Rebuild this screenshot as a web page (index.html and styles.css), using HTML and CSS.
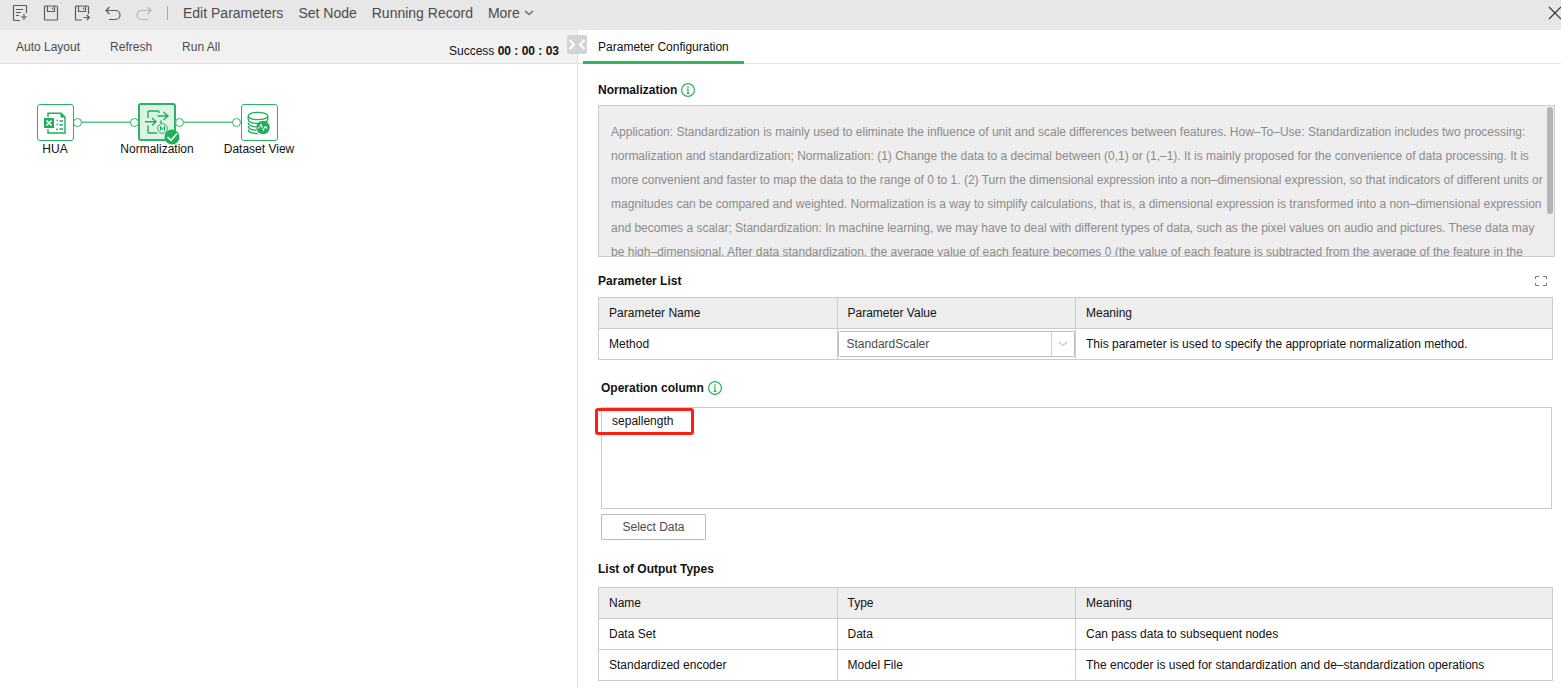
FILE: index.html
```html
<!DOCTYPE html>
<html lang="en">
<head>
<meta charset="utf-8">
<title>Parameter Configuration</title>
<link rel="stylesheet" href="styles.css">
</head>
<body>
<div class="app">
  <header class="topbar">
    <div class="tools">
      <button class="tool" aria-label="New"><svg width="16" height="18" viewBox="0 0 16 18"><path d="M14.500 9V2.500a1 1 0 0 0-1-1H2.500a1 1 0 0 0-1 1v13a1 1 0 0 0 1 1H8M4 5.500h7M4 8.500h5M4 11.500h3M12 10v6M9 13h6"/></svg></button>
      <button class="tool" aria-label="Save"><svg width="16" height="18" viewBox="0 0 16 18"><path d="M2.500 2h11a1 1 0 0 1 1 1v12a1 1 0 0 1-1 1h-11a1 1 0 0 1-1-1V3a1 1 0 0 1 1-1zM4.500 2v5.500h7V2M9.500 3.500v2"/></svg></button>
      <button class="tool" aria-label="Save as"><svg width="16" height="18" viewBox="0 0 16 18"><path d="M8 16H2.500a1 1 0 0 1-1-1V3a1 1 0 0 1 1-1h11a1 1 0 0 1 1 1v7M4.500 2v5.500h7V2M9.500 3.500v2M9.500 13.500h5.500M12.800 11l2.500 2.500-2.500 2.500"/></svg></button>
      <button class="tool" aria-label="Undo"><svg width="16" height="18" viewBox="0 0 16 18"><path d="M4.500 3L1 6.500 4.500 10M1.500 6.500h9a4.500 4.500 0 0 1 0 9H4"/></svg></button>
      <button class="tool faded" aria-label="Redo"><svg width="16" height="18" viewBox="0 0 16 18"><path d="M11.500 3L15 6.500 11.500 10M14.500 6.500H5.500a4.500 4.500 0 0 0 0 9H12"/></svg></button>
    </div>
    <span class="divider"></span>
    <nav class="menu">
      <button>Edit Parameters</button>
      <button>Set Node</button>
      <button>Running Record</button>
      <button>More <svg width="10" height="6" viewBox="0 0 10 6"><path d="M1 1l4 3.500L9 1"/></svg></button>
    </nav>
    <button class="close" aria-label="Close"><svg width="13" height="14" viewBox="0 0 13 14"><path d="M1 1l12 12M13 1L1 13"/></svg></button>
  </header>

  <main class="main">
    <section class="flow">
      <div class="flowbar">
        <button>Auto Layout</button>
        <button>Refresh</button>
        <button>Run All</button>
        <p class="status">Success <b>00 : 00 : 03</b></p>
      </div>
      <div class="canvas">
        <svg class="links" width="300" height="60" viewBox="0 0 300 60"><path d="M81 58.200h50M183 58.200h50"/></svg>
        <div class="node node-source">
          <div class="tile"><svg width="24" height="24" viewBox="0 0 24 24" fill="none" stroke="#1fae5a" stroke-width="1.400"><path d="M5 6V2.200h13l4 4M5 18v4h17V5.500M4.500 22h18"/><path d="M17.500 1.500l5 5h-5z" fill="#1fae5a" stroke="none"/><path d="M16.500 10H20M16.500 14H20M16.500 18H20M13.500 9.300H15M13.500 13.300H15M13 18.300h2" stroke-width="1.300"/><path d="M1 7h10v10H1z" fill="#1fae5a" stroke="none"/><path d="M3.500 9.500l5 5M8.500 9.500l-5 5" stroke="#fff" stroke-width="1.600"/></svg></div>
          <span>HUA</span>
        </div>
        <div class="node node-norm">
          <div class="tile active"><svg width="26" height="26" viewBox="0 0 26 26" fill="none" stroke="#1fae5a" stroke-width="1.400"><path d="M4 9V3a1 1 0 0 1 1-1h9a1 1 0 0 1 1 1v1M4 16.500V23a1 1 0 0 0 1 1h8M13.500 7H24M19.500 3l4.500 4-4.500 4M1 12.800h11M8 9l4 3.800-4 3.700M17 11.500v3"/><circle cx="18.500" cy="19.500" r="4.800" stroke-width="1"/><path d="M16.500 21.500v-4l2 3 2-3v4" stroke-width="1"/></svg>
            <svg class="done" width="16" height="16" viewBox="0 0 16 16"><circle cx="8" cy="8" r="7.500" fill="#1fae5a"/><path d="M3.500 8l3.500 3.300L13 4.500" fill="none" stroke="#fff" stroke-width="1.600"/></svg>
          </div>
          <span>Normalization</span>
        </div>
        <div class="node node-view">
          <div class="tile"><svg width="24" height="24" viewBox="0 0 24 24" fill="none" stroke="#1fae5a" stroke-width="1.300"><ellipse cx="11" cy="5" rx="9.800" ry="3.700"/><path d="M1.200 5v3.500c0 2.200 4 4 9.500 4s10-1.800 10-4V5M1.200 11.500c0 2.300 3.500 4 8 4.300M1.200 15c0 2.500 3.500 4 8 4.200M1.200 18.500c0 2.500 4 4 9.500 4"/><circle cx="16" cy="16.500" r="6.800" fill="#1fae5a" stroke="none"/><path d="M10.500 17h1.500l2-3.500 2.500 5.500 2-4 1.500 3" stroke="#fff" stroke-width="1.200" stroke-dasharray="2.500 .8"/></svg></div>
          <span>Dataset View</span>
        </div>
        <i class="port port-a"></i><i class="port port-b"></i><i class="port port-c"></i><i class="port port-d"></i>
      </div>
      <button class="collapse" aria-label="Collapse panel"><svg width="20" height="19" viewBox="0 0 20 19"><path d="M2.500 5l4.500 4.500L2.500 14M17.500 5L13 9.500l4.500 4.500"/></svg></button>
    </section>

    <section class="panel">
      <div class="tabs"><button class="tab">Parameter Configuration</button></div>
      <div class="content">
        <h2 class="heading">Normalization <svg class="info" width="14" height="14" viewBox="0 0 14 14"><circle cx="7" cy="7" r="6.400"/><path d="M5.800 6H7v4.200M5.500 10.400h3"/><path d="M7 3.200v1.500" stroke-width="1.500"/></svg></h2>
        <div class="description">
          <p>Application: Standardization is mainly used to eliminate the influence of unit and scale differences between features. How–To–Use: Standardization includes two processing:<br>
          normalization and standardization; Normalization: (1) Change the data to a decimal between (0,1) or (1,–1). It is mainly proposed for the convenience of data processing. It is<br>
          more convenient and faster to map the data to the range of 0 to 1. (2) Turn the dimensional expression into a non–dimensional expression, so that indicators of different units or<br>
          magnitudes can be compared and weighted. Normalization is a way to simplify calculations, that is, a dimensional expression is transformed into a non–dimensional expression<br>
          and becomes a scalar; Standardization: In machine learning, we may have to deal with different types of data, such as the pixel values on audio and pictures. These data may<br>
          be high–dimensional. After data standardization, the average value of each feature becomes 0 (the value of each feature is subtracted from the average of the feature in the</p>
          <i class="thumb"></i>
        </div>

        <div class="list-head">
          <h2 class="heading">Parameter List</h2>
          <button class="expand" aria-label="Full screen"><svg width="12" height="10" viewBox="0 0 12 10"><path d="M.5 3V.5H4M8 .5h3.500V3M11.500 7v2.500H8M4 9.500H.5V7"/></svg></button>
        </div>
        <table class="grid">
          <thead><tr><th>Parameter Name</th><th>Parameter Value</th><th>Meaning</th></tr></thead>
          <tbody><tr>
            <td><label for="method">Method</label></td>
            <td class="field"><div class="picker"><select id="method"><option>StandardScaler</option></select><span class="arrow"><svg width="10" height="6" viewBox="0 0 10 6"><path d="M1 1l4 3.500L9 1"/></svg></span></div></td>
            <td>This parameter is used to specify the appropriate normalization method.</td>
          </tr></tbody>
        </table>

        <div class="operation">
          <h2 class="heading">Operation column <svg class="info" width="14" height="14" viewBox="0 0 14 14"><circle cx="7" cy="7" r="6.400"/><path d="M5.800 6H7v4.200M5.500 10.400h3"/><path d="M7 3.200v1.500" stroke-width="1.500"/></svg></h2>
          <div class="columns"><span>sepallength</span><i class="marker"></i></div>
          <button class="select-data">Select Data</button>
        </div>

        <h2 class="heading output-title">List of Output Types</h2>
        <table class="grid">
          <thead><tr><th>Name</th><th>Type</th><th>Meaning</th></tr></thead>
          <tbody>
            <tr><td>Data Set</td><td>Data</td><td>Can pass data to subsequent nodes</td></tr>
            <tr><td>Standardized encoder</td><td>Model File</td><td>The encoder is used for standardization and de–standardization operations</td></tr>
          </tbody>
        </table>
      </div>
    </section>
  </main>
</div>
</body>
</html>
```
FILE: styles.css
```css
* { box-sizing: border-box; }
body { margin: 0; background: #fff; color: #111; font: 12px/16px "Liberation Sans", Arial, sans-serif; }
button { margin: 0; padding: 0; border: 0; background: none; color: inherit; font: inherit; }
svg { display: block; }
p, h2 { margin: 0; }

.app { display: flex; flex-direction: column; min-height: 100vh; }

.topbar { display: flex; align-items: center; height: 30px; padding: 0 0 4px 12px; background: #e7e7e7; color: #4c4c4c; font-size: 14px; }
.topbar svg { fill: none; stroke: #5c5c5c; stroke-width: 1.2; }
.tools { display: flex; gap: 15px; }
.faded { opacity: 0.35; }
.divider { width: 1px; height: 14px; margin: 0 15px; background: #aaa; }
.menu { display: flex; gap: 15px; }
.menu button { display: flex; align-items: center; gap: 4px; }
.close { margin-left: auto; }
.topbar .close svg { stroke: #333; }

.main { display: flex; flex: 1; }

.flow { position: relative; display: flex; flex-direction: column; width: 37.03%; border-right: 1px solid #ddd; }
.flowbar { display: flex; align-items: center; gap: 30px; height: 34px; padding: 0 18px 0 16px; border-bottom: 1px solid #e0e0e0; background: #f1f1f1; color: #4c4c4c; }
.status { margin-left: auto; padding-top: 8px; color: #111; }
.collapse { position: absolute; top: 5px; right: -10px; border-radius: 2px; background: #d3d3d3; }
.collapse svg { fill: none; stroke: #fff; stroke-width: 2; }

.canvas { position: relative; flex: 1; }
.links { position: absolute; top: 0; left: 0; stroke: #5fc583; stroke-width: 1.4; }
.node { position: absolute; top: 39px; display: flex; flex-direction: column; align-items: center; width: 100px; }
.node-source { left: 5px; }
.node-norm { left: 107px; }
.node-view { left: 209px; }
.tile { position: relative; display: flex; align-items: center; justify-content: center; width: 37px; height: 37px; margin-top: 1px; border: 1px solid #28b562; border-radius: 3px; background: #fff; }
.active { width: 38px; height: 38px; margin-top: 0; border-width: 2px; background: #def3e6; }
.done { position: absolute; right: -6px; bottom: -6px; }
.port { position: absolute; top: 54px; width: 9px; height: 9px; border: 1px solid #28b562; border-radius: 50%; background: #fff; }
.port-a { left: 73px; }
.port-b { left: 130px; }
.port-c { left: 175px; }
.port-d { left: 232px; }

.panel { flex: 1; min-width: 0; }
.tabs { height: 34px; padding-left: 5px; border-bottom: 1px solid #e3e3e3; }
.tab { height: 34px; padding: 2px 15px 0; border-bottom: 3px solid #2cb85a; }
.content { padding: 18px 8px 7px 20px; }
.heading { display: flex; align-items: center; gap: 4px; font-size: 12px; line-height: 16px; }
.info { fill: none; stroke: #28b562; stroke-width: 1.2; }

.description { position: relative; height: 152px; margin: 7px -2px 0 0; padding: 14px 0 0 12px; overflow: hidden; border: 1px solid #ccc; background: #eee; color: #8b8b8b; line-height: 24px; white-space: nowrap; }
.thumb { position: absolute; top: 1px; right: 1px; width: 6px; height: 107px; border-radius: 3px; background: #b5b5b5; }

.list-head { display: flex; align-items: center; justify-content: space-between; margin: 16px 0 8px; padding-right: 6px; }
.expand svg { fill: none; stroke: #777; }

.grid { width: 100%; table-layout: fixed; border-collapse: collapse; }
.grid th, .grid td { height: 31px; padding: 0 10px; border: 1px solid #ccc; font-weight: normal; text-align: left; }
.grid th { background: #eee; }
.grid th:nth-child(1), .grid th:nth-child(2) { width: 25%; }
.grid .field { padding: 0; }
.picker { position: relative; height: 26px; border: 1px solid #bbb; border-radius: 2px; }
.picker select { width: 100%; height: 24px; padding: 0 8px; appearance: none; border: 0; background: #fff; color: #4c4c4c; font: inherit; }
.arrow { position: absolute; top: 0; right: 0; display: flex; align-items: center; justify-content: center; width: 23px; height: 24px; border-left: 1px solid #ccc; pointer-events: none; }
.arrow svg { fill: none; stroke: #aaa; }

.operation { margin-top: 20px; padding: 0 1px 0 3px; }
.columns { position: relative; height: 102px; margin-top: 11px; padding: 5px 10px; border: 1px solid #ccc; }
.marker { position: absolute; top: 0; left: -7px; width: 99px; height: 27px; border: 3px solid #fb2013; border-radius: 3px; }
.select-data { width: 105px; height: 26px; margin-top: 5px; border: 1px solid #bbb; border-radius: 1px; color: #4c4c4c; }
.output-title { margin: 21px 0 10px; }
```
